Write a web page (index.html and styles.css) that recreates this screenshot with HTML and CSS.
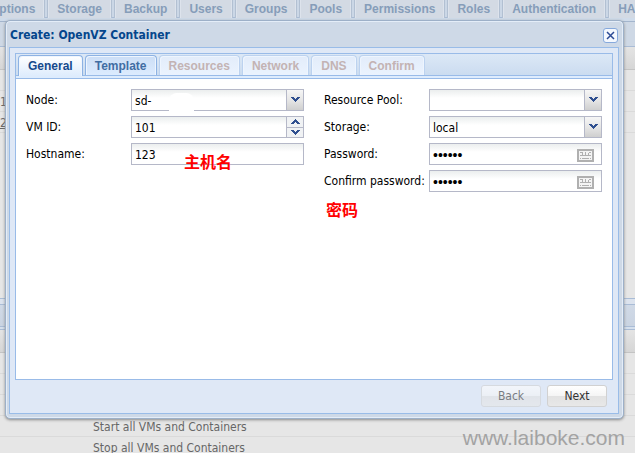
FILE: index.html
```html
<!DOCTYPE html>
<html lang="en">
<head>
    <meta charset="UTF-8">
    <meta name="viewport" content="width=device-width, initial-scale=1.0">
    <title>Create: OpenVZ Container</title>
    <link rel="stylesheet" href="styles.css">
</head>
<body>
<div class="page">
    <nav class="page-tabs">
        <a href="#" class="page-tab">Options</a>
        <a href="#" class="page-tab">Storage</a>
        <a href="#" class="page-tab">Backup</a>
        <a href="#" class="page-tab">Users</a>
        <a href="#" class="page-tab">Groups</a>
        <a href="#" class="page-tab">Pools</a>
        <a href="#" class="page-tab">Permissions</a>
        <a href="#" class="page-tab">Roles</a>
        <a href="#" class="page-tab">Authentication</a>
        <a href="#" class="page-tab">HA</a>
    </nav>
    <div class="page-toolbar"></div>
    <div class="grid-head"></div>
    <div class="grid-body">
        <div class="grid-row"></div>
        <div class="grid-row">1</div>
        <div class="grid-row"><a href="#">2</a></div>
    </div>
    <div class="log-title"></div>
    <div class="grid-head"></div>
    <div class="log-row"></div>
    <div class="log-row"></div>
    <div class="log-row"></div>
    <div class="log-row">Start all VMs and Containers</div>
    <div class="log-row">Stop all VMs and Containers</div>
    <div class="watermark">www.laiboke.com</div>
</div>

<div class="window" role="dialog" aria-labelledby="windowTitle">
    <div class="window-header">
        <h1 id="windowTitle">Create: OpenVZ Container</h1>
        <button class="window-close" type="button" aria-label="Close">
            <svg width="9" height="9" viewBox="0 0 9 9"><path d="M1 1l7 7M8 1l-7 7" stroke="#2c4a94" stroke-width="1.500"/></svg>
        </button>
    </div>
    <form class="window-body">
        <div class="wizard">
            <div class="tabs">
                <button class="tab active" type="button">General</button>
                <button class="tab" type="button">Template</button>
                <button class="tab" type="button" disabled>Resources</button>
                <button class="tab" type="button" disabled>Network</button>
                <button class="tab" type="button" disabled>DNS</button>
                <button class="tab" type="button" disabled>Confirm</button>
            </div>
            <div class="fields">
                <div class="column">
                    <div class="field">
                        <label for="node">Node:</label>
                        <div class="control">
                            <select id="node"><option>sd-</option></select>
                            <span class="trigger"><svg width="9" height="6" viewBox="0 0 9 6"><path d="M0 0h3v1h1v1h1v-1h1v-1h3v1h-1v1h-1v1h-1v1h-1v1h-1v-1h-1v-1h-1v-1h-1v-1h-1z" fill="#2f4f8f"/></svg></span>
                            <span class="smudge"></span>
                        </div>
                    </div>
                    <div class="field">
                        <label for="vmid">VM ID:</label>
                        <div class="control">
                            <input id="vmid" type="text" value="101">
                            <span class="spinner">
                                <button type="button" aria-label="Increase"><svg width="9" height="5" viewBox="0 0 9 5"><path d="M4 0h1v1h1v1h1v1h1v1h1v1h-3v-1h-1v-1h-1v1h-1v1h-3v-1h1v-1h1v-1h1v-1h1z" fill="#2f4f8f"/></svg></button>
                                <button type="button" aria-label="Decrease"><svg width="9" height="5" viewBox="0 0 9 5"><path d="M0 0h3v1h1v1h1v-1h1v-1h3v1h-1v1h-1v1h-1v1h-1v1h-1v-1h-1v-1h-1v-1h-1v-1h-1z" fill="#2f4f8f"/></svg></button>
                            </span>
                        </div>
                    </div>
                    <div class="field">
                        <label for="hostname">Hostname:</label>
                        <div class="control">
                            <input id="hostname" type="text" value="123">
                            <span class="note note-host" lang="zh">主机名</span>
                        </div>
                    </div>
                </div>
                <div class="column">
                    <div class="field">
                        <label for="pool">Resource Pool:</label>
                        <div class="control">
                            <select id="pool"><option></option></select>
                            <span class="trigger"><svg width="9" height="6" viewBox="0 0 9 6"><path d="M0 0h3v1h1v1h1v-1h1v-1h3v1h-1v1h-1v1h-1v1h-1v1h-1v-1h-1v-1h-1v-1h-1v-1h-1z" fill="#2f4f8f"/></svg></span>
                        </div>
                    </div>
                    <div class="field">
                        <label for="storage">Storage:</label>
                        <div class="control">
                            <select id="storage"><option>local</option></select>
                            <span class="trigger"><svg width="9" height="6" viewBox="0 0 9 6"><path d="M0 0h3v1h1v1h1v-1h1v-1h3v1h-1v1h-1v1h-1v1h-1v1h-1v-1h-1v-1h-1v-1h-1v-1h-1z" fill="#2f4f8f"/></svg></span>
                        </div>
                    </div>
                    <div class="field">
                        <label for="password">Password:</label>
                        <div class="control">
                            <input id="password" type="password" value="secret">
                            <svg class="keyboard" width="17" height="13" viewBox="0 0 17 13"><path d="M1 1h15v11h-15z" fill="#f4f4f4" stroke="#b0b0b0" stroke-width="2"/><path d="M3 3.500h2M12 3.500h2M3 6.500h11M3 9.500h1M5 9.500h7M13 9.500h1M5.500 3v4M8.500 3v4M11.500 4v3" stroke="#b0b0b0"/></svg>
                        </div>
                    </div>
                    <div class="field">
                        <label for="confirm">Confirm password:</label>
                        <div class="control">
                            <input id="confirm" type="password" value="secret">
                            <svg class="keyboard" width="17" height="13" viewBox="0 0 17 13"><path d="M1 1h15v11h-15z" fill="#f4f4f4" stroke="#b0b0b0" stroke-width="2"/><path d="M3 3.500h2M12 3.500h2M3 6.500h11M3 9.500h1M5 9.500h7M13 9.500h1M5.500 3v4M8.500 3v4M11.500 4v3" stroke="#b0b0b0"/></svg>
                        </div>
                    </div>
                    <p class="note" lang="zh">密码</p>
                </div>
            </div>
        </div>
        <div class="buttons">
            <button class="btn" type="button" disabled>Back</button>
            <button class="btn" type="button">Next</button>
        </div>
    </form>
</div>
</body>
</html>
```

FILE: styles.css
```css
* {
    box-sizing: border-box;
}

body {
    margin: 0;
    background-color: #e6e6e6;
    font-family: "DejaVu Sans Condensed", "Noto Sans", sans-serif;
    font-size: 12px;
    color: #000;
}

button, input, select {
    font: inherit;
    color: inherit;
    margin: 0;
}

svg {
    display: block;
    flex: none;
}

.page {
    height: 100vh;
    overflow: hidden;
    color: #666;
}

.page-tabs {
    display: flex;
    gap: 2px;
    height: 22px;
    margin-left: -20px;
    background-color: #cbd7e6;
    border-bottom: 1px solid #a3b5cd;
    box-shadow: inset 0 -3px #cfdbea, inset 0 -4px #a9bcd6;
}

.page-tab {
    height: 18px;
    padding: 0 9px;
    border: 1px solid #b2c0d2;
    border-width: 0 1px;
    box-shadow: inset 1px 0 #dde3ec, inset -1px 0 #dde3ec;
    background-color: #d3dae4;
    color: #869db9;
    font: bold 12px/18px "Liberation Sans", Arial, sans-serif;
    text-decoration: none;
    white-space: nowrap;
}

.page-toolbar {
    height: 25px;
    background-color: #ced8e5;
    border-bottom: 1px solid #a9bcd6;
}

.grid-head {
    height: 23px;
    background: linear-gradient(#e4e4e4, #d6d6d6);
    border-bottom: 1px solid #c4c4c4;
}

.grid-body {
    height: 228px;
}

.grid-row {
    height: 21px;
    border-bottom: 1px solid #dadada;
    line-height: 22px;
}

.grid-row a {
    color: inherit;
}

.log-title {
    height: 32px;
    border: solid #a9bcd6;
    border-width: 1px 0;
    background: linear-gradient(#d2dbe8, #c9d3e1);
    box-shadow: inset 0 5px #dce3ee, inset 0 6px #a9bcd6, inset 0 -2px #d5dfec, inset 0 -3px #a9bcd6;
}

.log-row {
    height: 21px;
    padding-left: 93px;
    border-bottom: 1px solid #dadada;
    line-height: 22px;
}

.watermark {
    position: absolute;
    right: 10px;
    bottom: 3px;
    color: #a3a3a3;
    font: 21px/24px "Liberation Sans", Arial, sans-serif;
}

.window {
    position: absolute;
    top: 20px;
    left: 5px;
    right: 11px;
    padding: 0 4px 4px 3px;
    border: 1px solid #9db0c8;
    border-radius: 5px;
    background-color: #ced9e7;
    box-shadow: inset 0 0 0 1px #e4edf8, 0 1px 3px #888;
}

.window-header {
    display: flex;
    align-items: center;
    justify-content: space-between;
    height: 26px;
    padding: 2px 1px 0;
}

.window-header h1 {
    margin: 0;
    color: #04468c;
    font-size: 12px;
    font-weight: bold;
}

.window-close {
    display: flex;
    align-items: center;
    justify-content: center;
    width: 15px;
    height: 15px;
    padding: 0;
    border: 1px solid #86a9dc;
    border-radius: 3px;
    background-color: #f4f8fe;
}

.window-body {
    padding: 5px;
    border: 1px solid #99bce8;
    background-color: #dfe8f6;
}

.wizard {
    border: 1px solid #99bbe8;
}

.tabs {
    display: flex;
    gap: 2px;
    height: 25px;
    padding: 1px 2px 0;
    border-bottom: 1px solid #99bbe8;
    background: linear-gradient(#dce8f6, #cbdcf0 21px, #99bbe8 21px, #99bbe8 22px, #deecfd 22px);
}

.tab {
    height: 20px;
    padding: 0 9px;
    border: 1px solid #8db2e3;
    border-bottom: 0;
    border-radius: 4px 4px 0 0;
    background: linear-gradient(#ccdef6, #dcebfe);
    box-shadow: inset 1px 1px #eef5fe, inset -1px 0 #eef5fe;
    color: #416da3;
    font: bold 12px/18px "Liberation Sans", Arial, sans-serif;
}

.tab.active {
    height: 21px;
    background: linear-gradient(#fff, #deecfd);
    color: #15498b;
}

.tab:disabled {
    border-color: #bcd2ef;
    background: linear-gradient(#e2ecfa, #ebf3fe);
    color: #c3b3b3;
}

.fields {
    display: grid;
    grid-template-columns: 1fr 1fr;
    gap: 20px;
    min-height: 300px;
    padding: 10px;
    background-color: #fff;
}

.column {
    display: flex;
    flex-direction: column;
    gap: 5px;
}

.field {
    display: flex;
}

.field label {
    width: 105px;
    flex: none;
    line-height: 22px;
    white-space: nowrap;
}

.control {
    position: relative;
    display: flex;
    flex: 1;
    min-width: 0;
    height: 22px;
    border: 1px solid #b5b8c8;
    background: linear-gradient(#ebeeee, #fff 8px);
}

.control input, .control select {
    flex: 1;
    width: 100%;
    min-width: 0;
    padding: 2px 3px 0;
    border: 0;
    outline: 0;
    background: none;
    appearance: none;
}

.control input[type="password"] {
    font: 14px "Liberation Sans", Arial, sans-serif;
}

.trigger {
    position: absolute;
    top: 0;
    right: 0;
    bottom: 0;
    display: flex;
    align-items: center;
    justify-content: center;
    width: 17px;
    border-left: 1px solid #b5b8c8;
    background: linear-gradient(#f6f6f6, #e6e6e6 50%, #cfcfcf);
    pointer-events: none;
}

/* blanks out the rest of the node name */
.smudge {
    position: absolute;
    top: 3px;
    left: 37px;
    width: 25px;
    height: 18px;
    border-radius: 8px 8px 0 0;
    background-color: #fff;
}

.spinner {
    display: flex;
    flex-direction: column;
    width: 17px;
    border-left: 1px solid #b5b8c8;
}

.spinner button {
    display: flex;
    flex: 1;
    align-items: center;
    justify-content: center;
    padding: 0;
    border: 0;
    background-color: #f0f2f4;
}

.spinner button + button {
    border-top: 1px solid #b5b8c8;
}

.keyboard {
    margin: 5px 7px 0 0;
}

.note {
    margin: 0 2px;
    color: #f00;
    font: bold 16px/24px "Noto Sans CJK SC", sans-serif;
}

.note-host {
    position: absolute;
    top: 5px;
    left: 50px;
}

.buttons {
    display: flex;
    justify-content: flex-end;
    gap: 6px;
    padding: 5px 6px 1px;
}

.btn {
    width: 60px;
    height: 22px;
    padding: 0;
    border: 1px solid #d1d1d1;
    border-radius: 3px;
    background: linear-gradient(#fff, #f5f5f5 48%, #e2e2e2 52%, #e8e8e8);
    color: #333;
}

.btn:disabled {
    opacity: 0.6;
}
```
